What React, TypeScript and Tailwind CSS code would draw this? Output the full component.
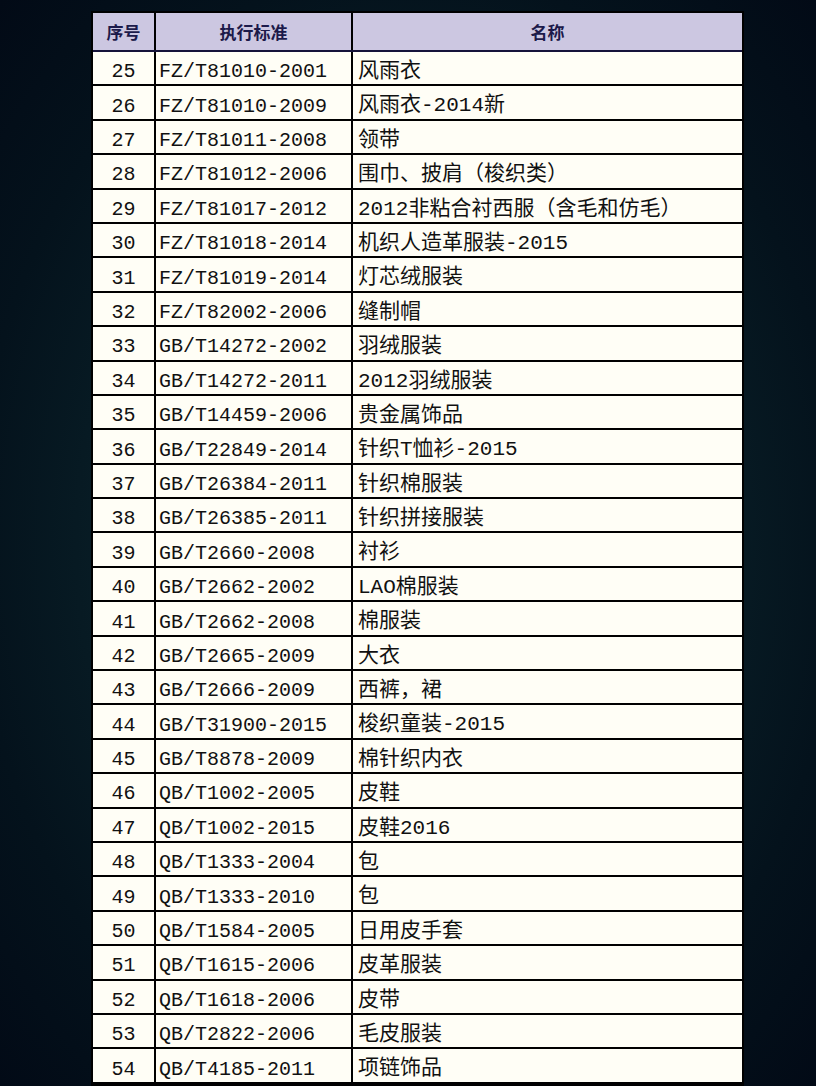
const rows: [number, string, string][] = [
  [25, 'FZ/T81010-2001', '风雨衣'],
  [26, 'FZ/T81010-2009', '风雨衣-2014新'],
  [27, 'FZ/T81011-2008', '领带'],
  [28, 'FZ/T81012-2006', '围巾、披肩（梭织类）'],
  [29, 'FZ/T81017-2012', '2012非粘合衬西服（含毛和仿毛）'],
  [30, 'FZ/T81018-2014', '机织人造革服装-2015'],
  [31, 'FZ/T81019-2014', '灯芯绒服装'],
  [32, 'FZ/T82002-2006', '缝制帽'],
  [33, 'GB/T14272-2002', '羽绒服装'],
  [34, 'GB/T14272-2011', '2012羽绒服装'],
  [35, 'GB/T14459-2006', '贵金属饰品'],
  [36, 'GB/T22849-2014', '针织T恤衫-2015'],
  [37, 'GB/T26384-2011', '针织棉服装'],
  [38, 'GB/T26385-2011', '针织拼接服装'],
  [39, 'GB/T2660-2008', '衬衫'],
  [40, 'GB/T2662-2002', 'LAO棉服装'],
  [41, 'GB/T2662-2008', '棉服装'],
  [42, 'GB/T2665-2009', '大衣'],
  [43, 'GB/T2666-2009', '西裤，裙'],
  [44, 'GB/T31900-2015', '梭织童装-2015'],
  [45, 'GB/T8878-2009', '棉针织内衣'],
  [46, 'QB/T1002-2005', '皮鞋'],
  [47, 'QB/T1002-2015', '皮鞋2016'],
  [48, 'QB/T1333-2004', '包'],
  [49, 'QB/T1333-2010', '包'],
  [50, 'QB/T1584-2005', '日用皮手套'],
  [51, 'QB/T1615-2006', '皮革服装'],
  [52, 'QB/T1618-2006', '皮带'],
  [53, 'QB/T2822-2006', '毛皮服装'],
  [54, 'QB/T4185-2011', '项链饰品'],
];

export default function App() {
  return (
    <div className="w-[816px] h-[1086px] overflow-hidden bg-[radial-gradient(ellipse_at_center,#0f2d32_0%,#0a222a_40%,#04121c_75%,#020a16_100%)] pt-[11px] pl-[91px]">
      <div className="w-[653px] border-2 border-black bg-[#fffef6]">
        {/* header */}
        <div className="grid grid-cols-[63px_197px_1fr] h-[39px] bg-[#ccc7e1] border-b-2 border-[#15133a] text-[#1c1a4a] font-bold text-[17px] font-['Noto_Sans_CJK_SC',sans-serif]">
          <div className="flex items-center justify-center border-r-2 border-black">序号</div>
          <div className="flex items-center justify-center border-r-2 border-black">执行标准</div>
          <div className="flex items-center justify-center">名称</div>
        </div>
        {rows.map(([no, code, name]) => (
          <div key={no} className="grid grid-cols-[63px_197px_1fr] h-[34.4px] border-b-2 border-black text-[#111]">
            <div className="flex items-center justify-center pt-[5px] border-r-2 border-black text-[20px] font-['Liberation_Mono',monospace]">{no}</div>
            <div className="flex items-center pl-[3px] pt-[5px] border-r-2 border-black text-[20px] font-['Liberation_Mono',monospace]">{code}</div>
            <div className="flex items-center pl-[5px] pt-[4px] text-[21px] font-['Liberation_Mono','Noto_Sans_CJK_SC',monospace]">{name}</div>
          </div>
        ))}
      </div>
    </div>
  );
}
